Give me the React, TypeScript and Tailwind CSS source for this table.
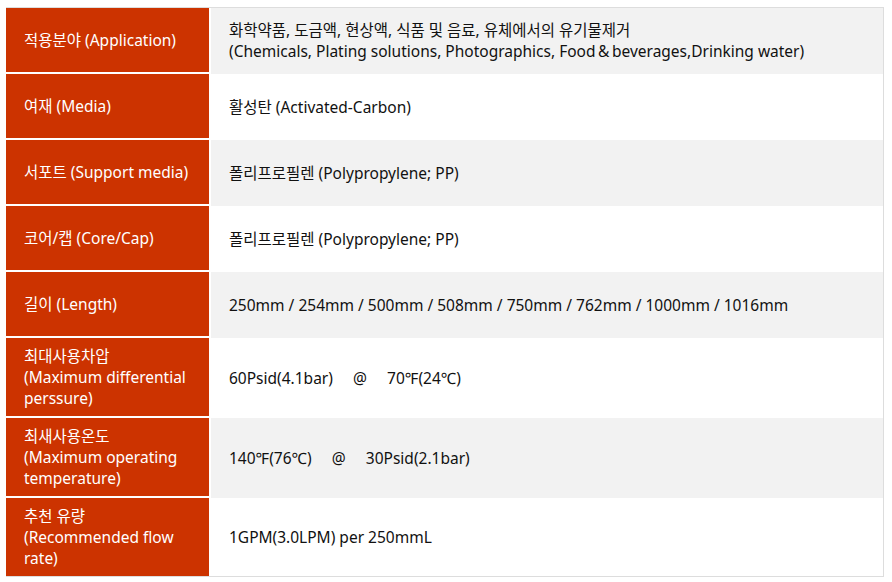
const rows: { label: string[]; value: string[]; tall?: boolean }[] = [
  {
    label: ['적용분야 (Application)'],
    value: [
      '화학약품, 도금액, 현상액, 식품 및 음료, 유체에서의 유기물제거',
      '(Chemicals, Plating solutions, Photographics, Food\u2009&\u2009beverages,Drinking water)',
    ],
  },
  { label: ['여재 (Media)'], value: ['활성탄 (Activated-Carbon)'] },
  { label: ['서포트 (Support media)'], value: ['폴리프로필렌 (Polypropylene; PP)'] },
  { label: ['코어/캡 (Core/Cap)'], value: ['폴리프로필렌 (Polypropylene; PP)'] },
  {
    label: ['길이 (Length)'],
    value: ['250mm / 254mm / 500mm / 508mm / 750mm / 762mm / 1000mm / 1016mm'],
  },
  {
    label: ['최대사용차압', '(Maximum differential', 'perssure)'],
    value: ['60Psid(4.1bar)\u00a0\u00a0\u00a0\u00a0 @ \u00a0\u00a0\u00a0\u00a070℉(24℃)'],
    tall: true,
  },
  {
    label: ['최새사용온도', '(Maximum operating', 'temperature)'],
    value: ['140℉(76℃)\u00a0\u00a0\u00a0\u00a0 @ \u00a0\u00a0\u00a0\u00a030Psid(2.1bar)'],
    tall: true,
  },
  {
    label: ['추천 유량', '(Recommended flow', 'rate)'],
    value: ['1GPM(3.0LPM) per 250mmL'],
    tall: true,
  },
];

export default function App() {
  return (
    <div
      className="min-h-[582px] w-[892px] bg-white pl-[6px] pt-[7px] text-[15.5px] leading-[21px]"
      style={{ fontFamily: '"Noto Sans", "Noto Sans CJK KR", sans-serif' }}
    >
      <div className="w-[878px] border-t border-r border-b border-[#dddddd]">
        {rows.map((row, i) => {
          const last = i === rows.length - 1;
          return (
            <div
              key={i}
              className={[
                'flex',
                row.tall ? (last ? 'h-[78px]' : 'h-[80px]') : 'h-[66px]',
              ].join(' ')}
            >
              <div
                className={[
                  'flex w-[205px] shrink-0 flex-col justify-center border-r-2 border-white bg-[#cc3300] pl-[18px] pr-2 text-white',
                  last ? '' : 'border-b-2',
                ].join(' ')}
              >
                {row.label.map((l, j) => (
                  <div key={j} className="whitespace-nowrap">
                    {l}
                  </div>
                ))}
              </div>
              <div
                className={[
                  'flex flex-1 flex-col justify-center pl-[18px] text-[#111111]',
                  i % 2 === 0 ? 'bg-[#f2f2f2]' : 'bg-white',
                ].join(' ')}
              >
                {row.value.map((v, j) => (
                  <div key={j} className="whitespace-nowrap">
                    {v}
                  </div>
                ))}
              </div>
            </div>
          );
        })}
      </div>
    </div>
  );
}
